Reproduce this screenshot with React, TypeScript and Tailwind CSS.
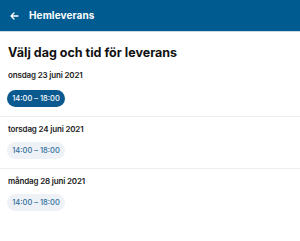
import React from "react"

const days = [
    { label: "onsdag 23 juni 2021", selected: true },
    { label: "torsdag 24 juni 2021", selected: false },
    { label: "måndag 28 juni 2021", selected: false },
]

export default function App() {
    return (
        <div className="w-[300px] h-[241px] bg-white overflow-hidden font-['Inter',sans-serif]">
            <div className="h-[32px] bg-[#005b91] flex items-center pl-[10px] gap-[10px] border-b border-[#c9d8e4]">
                <svg width="9" height="8" viewBox="0 0 9 8" fill="none" stroke="white" strokeWidth="1.3" strokeLinecap="round" strokeLinejoin="round">
                    <path d="M8 4H1M4 1 1 4l3 3" />
                </svg>
                <span className="text-white text-[10px] font-bold tracking-[0.01em]">Hemleverans</span>
            </div>
            <div className="px-[8px]">
                <h1 className="text-[12.5px] font-bold text-[#111] mt-[13px] leading-[16px]">Välj dag och tid för leverans</h1>
            </div>
            {days.map((d, i) => (
                <div key={i} className={`px-[7px] ${i > 0 ? "border-t border-[#eeeeee] pt-[6px] pb-[9px]" : "pt-[8px] pb-[9px]"}`}>
                    <div className="pl-[1px] text-[8px] font-semibold text-[#222] leading-[12px] tracking-[-0.02em]">{d.label}</div>
                    <div
                        className={`${i === 0 ? "mt-[9px]" : "mt-[7px]"} w-[58px] h-[17px] rounded-full flex items-center justify-center text-[7.5px] font-medium ${d.selected ? "bg-[#0a5a8f] text-white" : "bg-[#eef2f6] text-[#2f6e9c]"}`}
                    >
                        14:00 – 18:00
                    </div>
                </div>
            ))}
        </div>
    )
}
